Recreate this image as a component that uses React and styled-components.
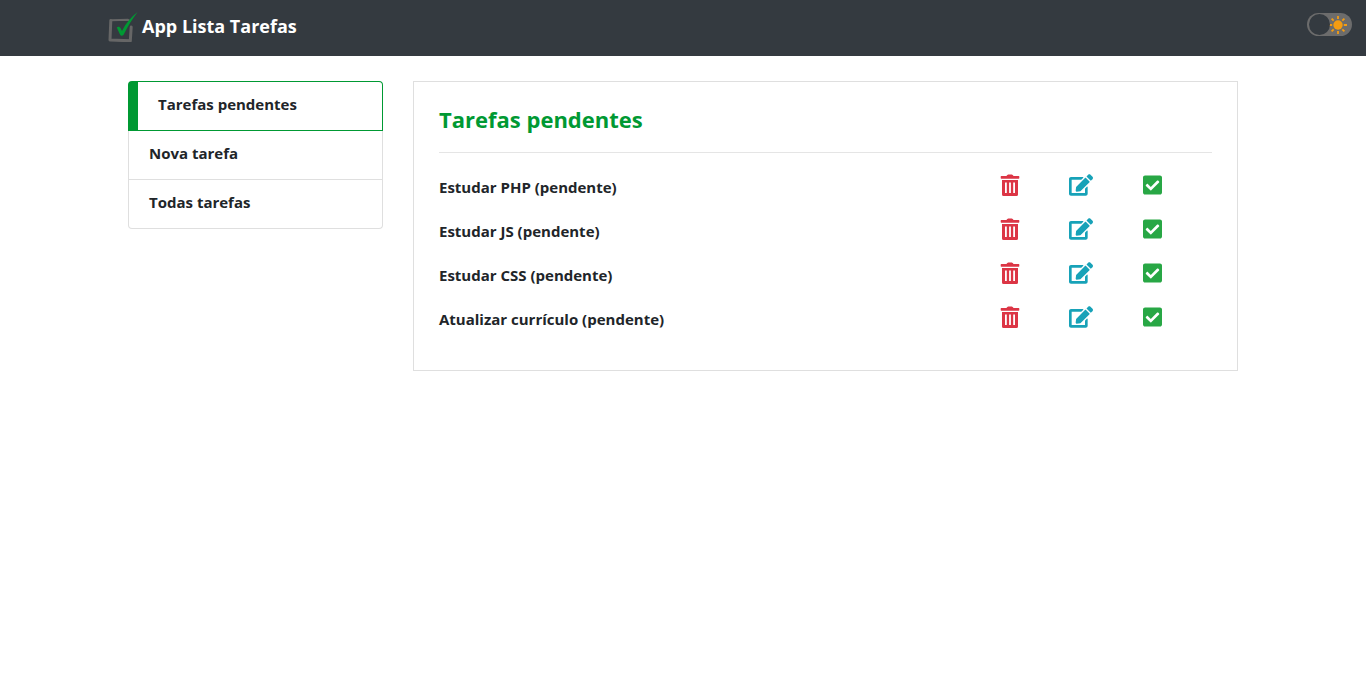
import React, { useState } from "react";
import styled, { createGlobalStyle } from "styled-components";
import { FaEdit, FaCheckSquare } from "react-icons/fa";

const GlobalStyle = createGlobalStyle`
  *, *::before, *::after { box-sizing: border-box; }
  body {
    margin: 0;
    background: #fff;
    color: #212529;
    font-family: "Open Sans", "Noto Sans", sans-serif;
    font-size: 15px;
    font-weight: 700;
    line-height: 24px;
  }
`;

const Navbar = styled.header`
  position: relative;
  display: flex;
  align-items: center;
  height: 56px;
  background: #343a40;
`;

const NavContainer = styled.div`
  width: 100%;
  max-width: 1140px;
  margin: 0 auto;
  display: flex;
  align-items: center;
`;

const Brand = styled.a`
  display: inline-flex;
  align-items: center;
  gap: 4px;
  margin-left: -5px;
  padding-bottom: 4px;
  color: #fff;
  font-size: 18px;
  line-height: 32px;
  text-decoration: none;
  white-space: nowrap;
`;

const ThemeLabel = styled.label`
  position: absolute;
  top: 13px;
  right: 14px;
  display: block;
  width: 45px;
  height: 23px;
  border-radius: 12px;
  background: #6c6c6c;
  cursor: pointer;
`;

const ThemeInput = styled.input`
  appearance: none;
  position: absolute;
  top: 1px;
  left: ${(p) => (p.checked ? "22px" : "2px")};
  width: 21px;
  height: 21px;
  margin: 0;
  border-radius: 50%;
  background: #343a40;
  cursor: pointer;
`;

const SunSvg = styled.svg`
  position: absolute;
  top: 3px;
  right: 5px;
`;

const Main = styled.main`
  max-width: 1140px;
  margin: 25px auto 0;
  display: flex;
  align-items: flex-start;
`;

const Column = styled.div`
  flex: 0 0 ${(p) => p.$share};
  min-width: 0;
  padding: 0 15px;
`;

const Menu = styled.ul`
  margin: 0;
  padding: 0;
  list-style: none;
`;

const MenuItem = styled.li`
  padding: 10px 20px 14px;
  border: 1px solid ${(p) => (p.$active ? "#009933" : "#dfdfdf")};
  border-left-width: ${(p) => (p.$active ? "10px" : "1px")};
  ${(p) => !p.$active && "border-top-width: 0;"}
  &:first-child { border-radius: 4px 4px 0 0; }
  &:last-child { border-radius: 0 0 4px 4px; }
`;

const MenuLink = styled.a`
  display: block;
  color: inherit;
  text-decoration: none;
`;

const Panel = styled.section`
  padding: 20px 25px 29px;
  border: 1px solid #dfdfdf;
`;

const Title = styled.h1`
  margin: 0;
  padding-bottom: 16px;
  color: #009933;
  font-size: 22px;
  line-height: 34px;
`;

const TaskList = styled.ul`
  margin: 0;
  padding: 12px 0 0;
  border-top: 1px solid #e5e5e5;
  list-style: none;
`;

const Task = styled.li`
  display: flex;
  align-items: center;
  height: 44px;
`;

const TaskText = styled.span`
  flex: 1;
`;

const Actions = styled.div`
  display: flex;
  align-items: center;
  gap: 50px;
  padding: 0 50px 4px 0;
`;

const IconButton = styled.button`
  display: flex;
  padding: 0;
  border: 0;
  background: none;
  color: ${(p) => p.$color};
  cursor: pointer;
`;

const TrashSvg = styled.svg`
  width: 19px;
  height: 22px;
  overflow: visible;
`;
const EditIcon = styled(FaEdit)`width: 24px; height: 22px;`;
const CheckIcon = styled(FaCheckSquare)`width: 19px; height: 22px;`;

function TrashIcon() {
  return (
    <TrashSvg viewBox="0 0 19 22" fill="currentColor" aria-hidden="true">
      <path d="M1.3 2H6.4L7.3 1Q7.6 .6 8.2 .6H11.8Q12.4 .6 12.7 1L13.6 2H18.7Q19.3 2 19.3 2.6V4Q19.3 4.7 18.7 4.7H1.3Q.7 4.7 .7 4V2.6Q.7 2 1.3 2Z" />
      <path
        fillRule="evenodd"
        d="M2 6H18V20.5Q18 22 16.5 22H3.5Q2 22 2 20.5ZM5 8.6V19H6.8V8.6ZM9.1 8.6V19H10.9V8.6ZM13.2 8.6V19H15V8.6Z"
      />
    </TrashSvg>
  );
}

function Logo() {
  return (
    <svg width="30" height="32" viewBox="0 0 30 32" fill="none" aria-hidden="true">
      <path d="M2.8 10.5 L2 30 L22.3 30.8 L23.2 17" stroke="#666" strokeWidth="3" strokeLinecap="round" strokeLinejoin="round" />
      <path d="M2.8 10.2 L20 9.8 L22 11" stroke="#666" strokeWidth="2" strokeLinecap="round" strokeLinejoin="round" />
      <path d="M8.8 17.5 C10.2 16 11.8 16.8 12.5 18 L14 21 C18 13 23 7 29.6 2 C24 9.5 20 16 16 24 C15.3 26 13 26.3 12 24.4 Z" fill="#009933" />
    </svg>
  );
}

function Sun() {
  return (
    <SunSvg width="18" height="18" viewBox="0 0 18 18" aria-hidden="true">
      <circle cx="9" cy="9" r="4.7" fill="#f39c12" />
      <path
        d="M9 0V3M9 15V18M0 9H3.2M14.8 9H18M2.6 2.6L4.7 4.7M13.3 13.3L15.4 15.4M15.4 2.6L13.3 4.7M4.7 13.3L2.6 15.4"
        stroke="#f39c12"
        strokeWidth="1.8"
      />
    </SunSvg>
  );
}

const menu = ["Tarefas pendentes", "Nova tarefa", "Todas tarefas"];
const tasks = ["Estudar PHP", "Estudar JS", "Estudar CSS", "Atualizar currículo"];

export default function App() {
  const [dark, setDark] = useState(false);
  return (
    <>
      <GlobalStyle />
      <Navbar>
        <NavContainer>
          <Brand href="#">
            <Logo />
            App Lista Tarefas
          </Brand>
        </NavContainer>
        <ThemeLabel>
          <Sun />
          <ThemeInput
            type="checkbox"
            aria-label="Tema"
            checked={dark}
            onChange={(e) => setDark(e.target.checked)}
          />
        </ThemeLabel>
      </Navbar>
      <Main>
        <Column $share="25%">
          <Menu>
            {menu.map((label, i) => (
              <MenuItem key={label} $active={i === 0}>
                <MenuLink href="#">{label}</MenuLink>
              </MenuItem>
            ))}
          </Menu>
        </Column>
        <Column $share="75%">
          <Panel>
            <Title>Tarefas pendentes</Title>
            <TaskList>
              {tasks.map((name) => (
                <Task key={name}>
                  <TaskText>{`${name} (pendente)`}</TaskText>
                  <Actions>
                    <IconButton $color="#dc3545" aria-label="Remover"><TrashIcon /></IconButton>
                    <IconButton $color="#17a2b8" aria-label="Editar"><EditIcon /></IconButton>
                    <IconButton $color="#28a745" aria-label="Concluir"><CheckIcon /></IconButton>
                  </Actions>
                </Task>
              ))}
            </TaskList>
          </Panel>
        </Column>
      </Main>
    </>
  );
}
